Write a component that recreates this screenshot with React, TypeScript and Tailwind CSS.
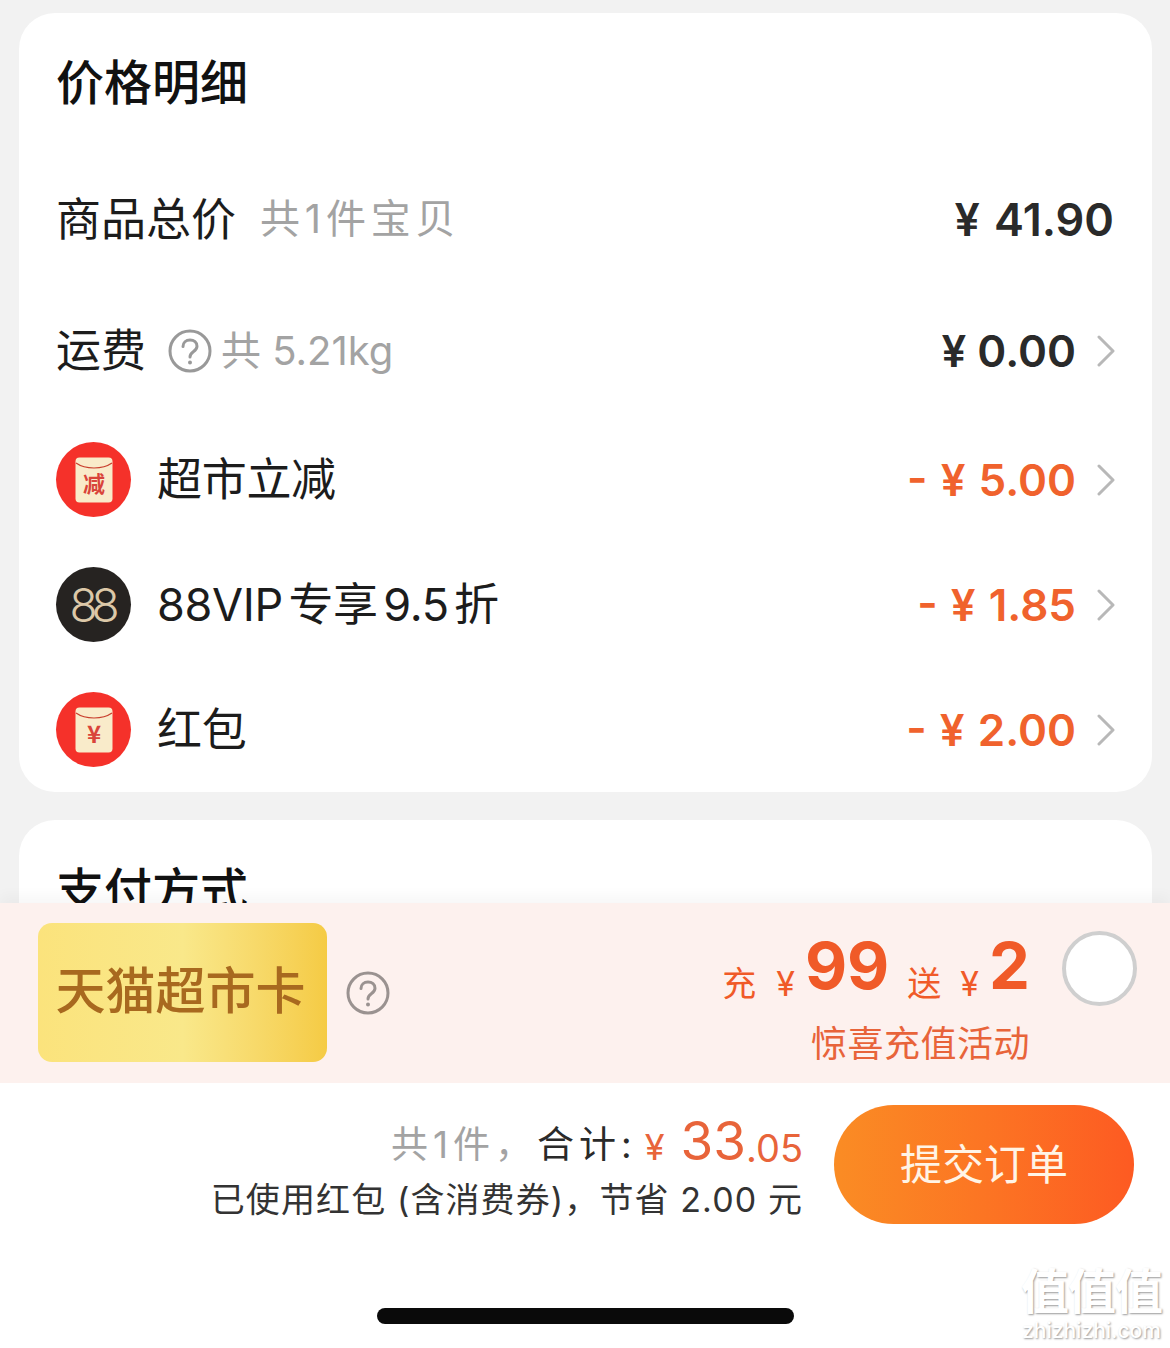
const font = { fontFamily: '"Inter", "Noto Sans CJK SC", sans-serif' };

function Help({ size, className }: { size: number; className?: string }) {
  return (
    <svg width={size} height={size} viewBox="0 0 44 44" fill="none" className={className}>
      <circle cx="22" cy="22" r="20" stroke="currentColor" strokeWidth="3" />
      <path
        d="M15 17.500c0-4 3-6.500 7-6.500s7 2.600 7 6.200c0 2.800-1.700 4.200-3.700 5.600-2 1.400-3.300 2.600-3.300 5.200"
        stroke="currentColor"
        strokeWidth="3"
        strokeLinecap="round"
      />
      <circle cx="22" cy="33.500" r="2" fill="currentColor" />
    </svg>
  );
}

function Chevron() {
  return (
    <svg width="18" height="32" viewBox="0 0 18 32" fill="none" className="shrink-0 text-[#b8b8b8]">
      <path d="M2 2l14 14L2 30" stroke="currentColor" strokeWidth="3" strokeLinecap="round" strokeLinejoin="round" />
    </svg>
  );
}

function Envelope({ label, size, y }: { label: string; size: number; y: number }) {
  return (
    <div className="flex h-[75px] w-[75px] shrink-0 items-center justify-center rounded-full bg-[#f5312a]">
      <svg width="38" height="46" viewBox="0 0 38 46">
        <rect x="0.500" y="0.500" width="37" height="45" rx="4" fill="#f9ebca" />
        <path d="M1 6c5 3.500 11 5 18 5s13-1.500 18-5" fill="none" stroke="#c9412f" strokeWidth="1.200" />
        <text
          x="19"
          y={y}
          textAnchor="middle"
          fontSize={size}
          fontWeight="700"
          fill="#d9443a"
          fontFamily="Noto Sans CJK SC, sans-serif"
        >
          {label}
        </text>
      </svg>
    </div>
  );
}

function Row({
  icon,
  label,
  value,
}: {
  icon: React.ReactNode;
  label: string;
  value: string;
}) {
  return (
    <div className="flex h-[125px] items-center justify-between pl-[37px] pr-[37px]">
      <div className="flex items-center gap-[26px]">
        {icon}
        <span className="text-[45px] leading-none tracking-[-0.3px] text-[#1c1c1c] [word-spacing:-7px]">{label}</span>
      </div>
      <div className="flex items-center gap-[21px]">
        <span className="text-[44px] font-semibold leading-none text-[#f0622d] [word-spacing:2px]">{value}</span>
        <Chevron />
      </div>
    </div>
  );
}

export default function App() {
  return (
    <div style={font} className="relative flex h-[1348px] w-[1170px] flex-col overflow-hidden bg-[#f2f2f2]">
      <div className="ml-[19px] mt-[13px] w-[1133px] rounded-[36px] bg-white">
        <div className="flex h-[140px] items-center pl-[37px]">
          <h2 className="text-[48px] font-medium leading-none text-[#111]">价格明细</h2>
        </div>
        <div className="flex h-[132px] items-center justify-between pl-[37px] pr-[38px]">
          <div className="flex items-center gap-[24px]">
            <span className="text-[45px] leading-none text-[#1c1c1c]">商品总价</span>
            <span className="text-[40px] leading-none tracking-[4.800px] text-[#a3a3a3]">共1件宝贝</span>
          </div>
          <span className="text-[45px] font-semibold leading-none text-[#2a2a2a] [word-spacing:3px]">¥ 41.90</span>
        </div>
        <div className="mb-[1px] flex h-[131px] items-center justify-between pl-[37px] pr-[37px]">
          <div className="flex items-center">
            <span className="text-[45px] leading-none text-[#1c1c1c]">运费</span>
            <Help size={44} className="ml-[22px] text-[#999]" />
            <span className="ml-[9px] text-[40px] leading-none text-[#a3a3a3]">共 5.21kg</span>
          </div>
          <div className="flex items-center gap-[21px]">
            <span className="text-[44px] font-semibold leading-none text-[#2a2a2a]">¥ 0.00</span>
            <Chevron />
          </div>
        </div>
        <Row icon={<Envelope label="减" size={22} y={35} />} label="超市立减" value="- ¥ 5.00" />
        <Row
          icon={
            <div className="flex h-[75px] w-[75px] shrink-0 items-center justify-center rounded-full bg-[#262321] pr-[4px] text-[46px] font-light leading-none tracking-[-6px] text-[#dcc8a8]">
              88
            </div>
          }
          label="88VIP 专享 9.5 折"
          value="- ¥ 1.85"
        />
        <Row icon={<Envelope label="¥" size={24} y={36} />} label="红包" value="- ¥ 2.00" />
      </div>

      <div className="ml-[19px] mt-[28px] h-[83px] w-[1133px] overflow-hidden rounded-t-[36px] bg-white pl-[37px] pt-[47px]">
        <h2 className="text-[48px] font-medium leading-none text-[#111]">支付方式</h2>
      </div>

      <div className="relative flex h-[180px] items-start justify-between bg-[#fdf1ee] pl-[38px] pr-[33px] pt-[20px] shadow-[0_-8px_12px_rgba(0,0,0,0.03)]">
        <div className="flex items-center gap-[19px]">
          <div className="flex h-[139px] w-[289px] items-center justify-center rounded-[14px] bg-gradient-to-r from-[#fbe37c] via-[#f9e88a] to-[#f5cb44] pb-[4px] pr-[4px] text-[50px] font-medium leading-none text-[#a8691f]">
            天猫超市卡
          </div>
          <Help size={44} className="text-[#9a9290]" />
        </div>
        <div className="flex gap-[32px]">
          <div className="flex flex-col items-end text-[#f05a28]">
            <div className="flex h-[82px] items-end">
              <span className="mb-[4px] text-[34px] leading-none">充</span>
              <span className="mb-[4px] ml-[20px] text-[34px] leading-none">¥</span>
              <span className="ml-[10px] text-[65px] font-bold leading-[78px]">99</span>
              <span className="mb-[4px] ml-[18px] text-[34px] leading-none">送</span>
              <span className="mb-[4px] ml-[19px] text-[34px] leading-none">¥</span>
              <span className="ml-[10px] text-[65px] font-bold leading-[78px]">2</span>
            </div>
            <span className="mt-[21px] text-[36px] leading-none tracking-[0.500px] text-[#e8643a]">惊喜充值活动</span>
          </div>
          <div className="mt-[8px] h-[75px] w-[75px] rounded-full border-[4px] border-[#cfcfcf] bg-white" />
        </div>
      </div>

      <div className="flex flex-1 flex-col bg-white">
        <div className="flex items-start justify-end gap-[31px] pr-[36px] pt-[22px]">
          <div className="flex flex-col items-end">
            <div className="flex h-[63px] items-end leading-none">
              <span className="mb-[5px] text-[37px] tracking-[5px] text-[#a3a3a3]">共1件，</span>
              <span className="mb-[5px] text-[37px] tracking-[5px] text-[#2a2a2a]">合计:</span>
              <span className="mb-[3px] ml-[8px] text-[36px] text-[#e8643a]">¥</span>
              <span className="ml-[16px] text-[53px] text-[#e8643a]">33</span>
              <span className="mb-[1px] text-[38px] text-[#e8643a]">.05</span>
            </div>
            <span className="mt-[15px] text-[34px] leading-none tracking-[1.100px] text-[#333]">已使用红包 (含消费券)，节省 2.00 元</span>
          </div>
          <button className="flex h-[119px] w-[300px] items-center justify-center rounded-full bg-gradient-to-r from-[#fa8c24] to-[#fd5a22] text-[42px] leading-none text-[#fff4e6]">
            提交订单
          </button>
        </div>
        <div className="mt-[84px] flex justify-center pl-[1px]">
          <div className="h-[16px] w-[417px] rounded-full bg-[#0a0a0a]" />
        </div>
      </div>

      <div className="absolute right-[8px] top-[1265px] flex flex-col items-center text-white [text-shadow:1px_1px_2px_#9a9a9a]">
        <span className="text-[48px] font-bold leading-[54px] tracking-[-1px]">值值值</span>
        <span className="text-[21px] font-medium leading-[24px]">zhizhizhi.com</span>
      </div>
    </div>
  );
}
